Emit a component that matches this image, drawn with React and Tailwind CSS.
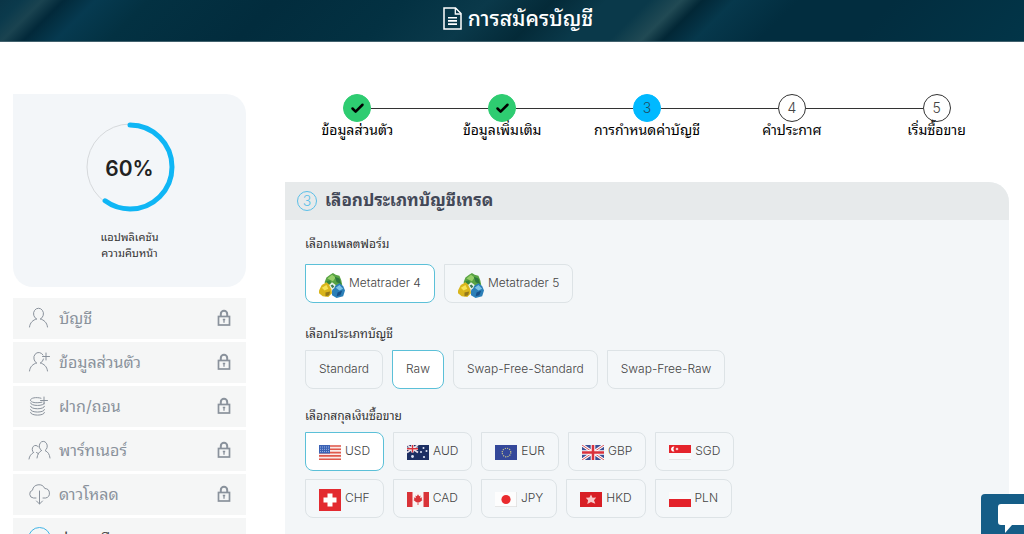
import { Check } from 'lucide-react';

const steps = [
  { id: 1, label: 'ข้อมูลส่วนตัว', state: 'done' },
  { id: 2, label: 'ข้อมูลเพิ่มเติม', state: 'done' },
  { id: 3, label: 'การกำหนดค่าบัญชี', state: 'active' },
  { id: 4, label: 'คำประกาศ', state: 'todo' },
  { id: 5, label: 'เริ่มซื้อขาย', state: 'todo' },
];

const circleStyles = {
  done: 'bg-[#2ecc71] border-[#2ecc71] text-black',
  active: 'bg-[#00b9ff] border-[#00b9ff] text-[#1f4f66]',
  todo: 'bg-white border-[#333333] text-[#444444]',
};

const menu = [
  { icon: 'user', label: 'บัญชี' },
  { icon: 'userPlus', label: 'ข้อมูลส่วนตัว' },
  { icon: 'coins', label: 'ฝาก/ถอน' },
  { icon: 'users', label: 'พาร์ทเนอร์' },
  { icon: 'cloud', label: 'ดาวโหลด' },
];

const platforms = ['Metatrader 4', 'Metatrader 5'];
const accountTypes = ['Standard', 'Raw', 'Swap-Free-Standard', 'Swap-Free-Raw'];
const currencyRows = [
  ['USD', 'AUD', 'EUR', 'GBP', 'SGD'],
  ['CHF', 'CAD', 'JPY', 'HKD', 'PLN'],
];

const menuIcons = {
  user: (
    <>
      <path d="M8.500 12A5 5.600 0 1 1 12.500 12" />
      <path d="M8.500 12C5 13 2 15.500 1.500 20M12.500 12c3.500 1 6.500 3.500 7 8" />
    </>
  ),
  userPlus: (
    <>
      <path d="M8.500 12A5 5.600 0 1 1 15 4M15.500 8a5 5.600 0 0 1-3 4" />
      <path d="M8.500 12C5 13 2 15.500 1.500 20M12.500 12c3.500 1 6.500 3.500 7 8" />
      <path d="M18 2v7M14.500 5.500h7" />
    </>
  ),
  coins: (
    <>
      <path d="M13 3.200C8 1.800 2.500 3 2.500 5.200S8 8.500 14 7.200" />
      <path d="M2.500 8c0 3.400 14 3.400 14 0M2.500 11.300c0 3.400 14 3.400 14 0M2.500 14.600c0 3.400 14 3.400 14 0M2.500 17.500c0 3.600 14 3.600 14 0" />
      <path d="M16 2v7M12.500 5.500h7" />
    </>
  ),
  users: (
    <>
      <path d="M13.500 11.500A4 4.800 0 1 1 17 11.500C20 13 21.500 15 22 19M13.500 11.500C11 13 9.500 15 9 19" />
      <path d="M5.500 13.500A3.500 4 0 1 1 10.500 8M5.500 13.500C3 15 1.500 17 1 20M8.500 13.500l2 1.200" />
    </>
  ),
  cloud: (
    <>
      <path d="M8 15H5.500a4 4 0 0 1-1-7.800A6.500 6.500 0 0 1 16.800 5.500a4.800 4.800 0 0 1 .8 9.500H15" />
      <path d="M11.500 8v13M8.500 18l3 3 3-3" />
    </>
  ),
};

function MenuIcon({ name }) {
  return (
    <svg
      viewBox="0 0 23 22"
      className="w-[23px] h-[22px] shrink-0"
      fill="none"
      stroke="currentColor"
      strokeWidth="1"
      strokeLinecap="round"
      aria-hidden="true"
    >
      {menuIcons[name]}
    </svg>
  );
}

function LockIcon() {
  return (
    <svg viewBox="0 0 14 18" className="w-[14px] h-[18px]" fill="none" stroke="currentColor" aria-hidden="true">
      <rect x="1.500" y="7.500" width="11" height="8.500" strokeWidth="1.700" />
      <path d="M3.800 7.500V5a3.200 3.200 0 0 1 6.400 0v2.500" strokeWidth="2" />
      <path d="M7 9.800v4M5.800 10.500h2.400" strokeWidth="1.300" />
    </svg>
  );
}

function DocumentIcon() {
  return (
    <svg viewBox="0 0 19 23" className="w-[19px] h-[23px]" fill="none" stroke="currentColor" aria-hidden="true">
      <path d="M1 1h11.500L18 6.500V22H1z" strokeWidth="1.500" />
      <path d="M12.300 1v6H18" strokeWidth="1.300" />
      <path d="M5 10.700h9M5 13.900h9M5 17.100h9" strokeWidth="1.600" />
    </svg>
  );
}

function MetatraderLogo() {
  return (
    <svg viewBox="0 0 28 28" className="w-[26px] h-[26px] mt-1" aria-hidden="true">
      <path d="M6 11l2-5 4-3 3-2 3 2 4 1 2 5 1 5-4 3H9z" fill="#58a344" />
      <path d="M9 7l5-4 4 3-3 4z" fill="#96cf68" />
      <path d="M17 5l5 2 2 6-5-2z" fill="#2d7a3d" />
      <path d="M8 10l4-1 1 3-4 2z" fill="#37863e" />
      <path d="M0 20l3-6 5-3 5 4 1 8-4 4-6-1-4-3z" fill="#d9b51c" />
      <path d="M3 17l5-3 2 4-4 2z" fill="#f7e356" />
      <path d="M7 22l5-1-1 4-4 1z" fill="#94781a" />
      <path d="M14 20l3-5 5-3 4 3 2 5-2 6-7 2-5-3z" fill="#2b7fb8" />
      <path d="M18 17l4-3 4 4-4 2z" fill="#7ec4e6" />
      <path d="M20 22l5-2-2 5-4 1z" fill="#164f88" />
      <path d="M11 14l3-3 4 3-2 4h-3z" fill="#e6f2ea" />
      <path d="M12.500 14.500l2-1 2 2-2 2z" fill="#3e7a55" />
    </svg>
  );
}

const flags = {
  USD: (
    <>
      <rect width="22" height="15" fill="#fbe9e7" />
      <path d="M0 1h22M0 4.300h22M0 7.600h22M0 10.900h22M0 14.200h22" stroke="#e0584c" strokeWidth="1.600" />
      <rect width="11" height="8.500" fill="#3b62b5" />
      <path d="M1 2h9M1 4.300h9M1 6.600h9" stroke="#b9cbee" strokeWidth="0.800" strokeDasharray="1 1" />
    </>
  ),
  AUD: (
    <>
      <rect width="22" height="15" fill="#1c2f63" />
      <path d="M0 0l11 7.500M11 0L0 7.500" stroke="#e8dfe8" strokeWidth="1.800" />
      <path d="M5.500 0v7.500M0 3.700h11" stroke="#fff" strokeWidth="2.600" />
      <path d="M5.500 0v7.500M0 3.700h11" stroke="#d8333b" strokeWidth="1.400" />
      <g fill="#dfe6f7">
        <circle cx="5.500" cy="11.500" r="1.400" />
        <circle cx="16.500" cy="3" r="1" />
        <circle cx="14" cy="7" r="1" />
        <circle cx="19.500" cy="6" r="1" />
        <circle cx="17" cy="12" r="1.100" />
      </g>
    </>
  ),
  EUR: (
    <>
      <rect width="22" height="15" fill="#34489a" />
      <circle cx="11.500" cy="7.500" r="4.300" fill="none" stroke="#c9c68a" strokeWidth="1.200" strokeDasharray="1.200 1.050" />
    </>
  ),
  GBP: (
    <>
      <rect width="22" height="15" fill="#3d4f95" />
      <path d="M0 0l22 15M22 0L0 15" stroke="#fff" strokeWidth="3" />
      <path d="M0 0l22 15M22 0L0 15" stroke="#d8545c" strokeWidth="1" />
      <path d="M11 0v15M0 7.500h22" stroke="#fff" strokeWidth="4.600" />
      <path d="M11 0v15M0 7.500h22" stroke="#d9313c" strokeWidth="2.600" />
    </>
  ),
  SGD: (
    <>
      <rect width="22" height="15" fill="#fafafa" />
      <rect width="22" height="8" fill="#e5242b" />
      <path d="M5.500 1.800a2.500 2.500 0 1 0 0 4.600 3 3 0 0 1 0-4.600z" fill="#fff" />
      <circle cx="8" cy="4" r="1.300" fill="#f9c9cb" />
      <path d="M0 14.600h22" stroke="#dddddd" strokeWidth="0.800" />
    </>
  ),
  CHF: (
    <>
      <rect width="22" height="22" fill="#e32a30" />
      <path d="M11 4.500v13M4.500 11h13" stroke="#fff" strokeWidth="5" />
    </>
  ),
  CAD: (
    <>
      <rect width="22" height="15" fill="#f8f4f4" />
      <path d="M0 0h5.500v15H0zM16.500 0H22v15h-5.500z" fill="#d93338" />
      <path d="M11 2.200l1.200 2 1.300-.6-.3 2.600 2-1-.6 2 .9.800-2.800 2.300H11.400V13h-.8v-2.700H9.300L6.500 8l.9-.8-.6-2 2 1-.3-2.600 1.300.6z" fill="#d93338" />
    </>
  ),
  JPY: (
    <>
      <rect width="22" height="15" fill="#fdfdfd" />
      <path d="M0 14.600h22M21.600 0v15" stroke="#dcdcdc" strokeWidth="0.800" />
      <circle cx="11" cy="7.500" r="4.600" fill="#ea2a2e" />
    </>
  ),
  HKD: (
    <>
      <rect width="22" height="15" fill="#d81f26" />
      <path d="M11 2.500l1.500 3.200 3.700-.2-2.200 2.700 1.300 3.600-4.300-1.700-3.700 1.900.8-3.800-2.300-2.500 3.700-.2z" fill="#f9c9c9" />
    </>
  ),
  PLN: (
    <>
      <rect width="22" height="15" fill="#fafafa" />
      <rect y="7" width="22" height="8" fill="#e3222a" />
    </>
  ),
};

function Flag({ code }) {
  const square = code === 'CHF';
  return (
    <svg
      viewBox={square ? '0 0 22 22' : '0 0 22 15'}
      className={square ? 'w-[22px] h-[22px] mt-1' : 'w-[22px] h-[15px] mt-1'}
      aria-hidden="true"
    >
      {flags[code]}
    </svg>
  );
}

function Option({ selected, children }) {
  return (
    <button
      type="button"
      aria-pressed={selected}
      className={`h-[39px] pb-[2px] px-[13px] flex items-center gap-1 border rounded-lg rounded-tl-none text-[12px] leading-[18px] font-light text-[#444444] cursor-pointer ${
        selected ? 'bg-white border-[#5bc0d8]' : 'bg-[#f4f7f9] border-[#dde3e6]'
      }`}
    >
      {children}
    </button>
  );
}

function Progress({ value }) {
  const length = 2 * Math.PI * 42;
  return (
    <section className="h-[193px] pt-[27px] flex flex-col items-center bg-[#f3f6f9] rounded-[20px] rounded-tl-none">
      <div className="grid place-items-center">
        <svg viewBox="0 0 92 92" className="col-start-1 row-start-1 w-[92px] h-[92px] -rotate-90" fill="none" aria-hidden="true">
          <circle cx="46" cy="46" r="43" stroke="#d6d9dc" strokeWidth="1" />
          <circle
            cx="46"
            cy="46"
            r="42"
            stroke="#0fb6f5"
            strokeWidth="5"
            strokeLinecap="round"
            strokeDasharray={`${(length * value) / 100} ${length}`}
          />
        </svg>
        <span className="col-start-1 row-start-1 pt-1 text-[21px] leading-7 font-semibold text-[#222222]">{value}%</span>
      </div>
      <p className="mt-4 text-[11px] leading-4 text-center text-[#333333]">
        แอปพลิเคชัน
        <br />
        ความคืบหน้า
      </p>
    </section>
  );
}

function Sidebar() {
  return (
    <aside className="w-[233px] shrink-0">
      <Progress value={60} />
      <nav className="mt-[11px] flex flex-col gap-[3px]">
        {menu.map((item) => (
          <a key={item.label} href="#" className="h-[41px] pb-[2px] px-[15px] flex items-center bg-[#f5f6f6] text-[#8a929c]">
            <MenuIcon name={item.icon} />
            <span className="ml-2 text-[16px] leading-6">{item.label}</span>
            <span className="ml-auto">
              <LockIcon />
            </span>
          </a>
        ))}
        <a href="#" className="h-[41px] px-[15px] flex items-center bg-[#f5f6f6] text-[#444444]">
          <span className="w-[23px] h-[23px] rounded-full border border-[#41b4e6]" />
          <span className="ml-2 text-[16px] leading-6">ช่วยเหลือ</span>
        </a>
      </nav>
    </aside>
  );
}

function Stepper() {
  return (
    <ol className="flex">
      {steps.map((step, i) => (
        <li key={step.id} className="flex-1 flex flex-col items-center">
          <div className="w-full flex items-center">
            <span className={`flex-1 h-px ${i > 0 ? 'bg-[#333333]' : ''}`} />
            <span
              className={`w-[28px] h-[28px] rounded-full border flex items-center justify-center text-[14px] leading-5 font-light ${circleStyles[step.state]}`}
            >
              {step.state === 'done' ? <Check size={15} strokeWidth={4} /> : step.id}
            </span>
            <span className={`flex-1 h-px ${i < steps.length - 1 ? 'bg-[#333333]' : ''}`} />
          </div>
          <span className="text-[14px] leading-4 whitespace-nowrap text-black">{step.label}</span>
        </li>
      ))}
    </ol>
  );
}

function Field({ label, children }) {
  return (
    <div role="group" aria-label={label}>
      <h3 className="mb-2 text-[12px] leading-4 text-[#333333]">{label}</h3>
      {children}
    </div>
  );
}

export default function App() {
  return (
    <div className="h-screen overflow-hidden bg-white font-['Inter','Noto_Sans_Thai_Looped','Noto_Looped_Thai','Loma','Waree','Tahoma','Garuda',sans-serif]">
      <header className="h-[42px] pb-1 pl-3 flex items-center justify-center gap-[6px] text-white border-b border-[#41616d] bg-[linear-gradient(135deg,#0a3547_0%,#0b3a4c_2%,#1a4350_4%,#02293a_6%,#063a50_9%,#033142_14%,#022c3d_26%,#033142_38%,#0a394a_46%,#042a38_52%,#0a394a_57%,#0a394a_61%,#214a54_64%,#022736_66%,#06384c_69%,#022d3f_75%,#022d3f_84%,#023548_100%)]">
        <DocumentIcon />
        <h1 className="text-[21px] leading-7 font-medium">การสมัครบัญชี</h1>
      </header>

      <div className="pt-[52px] pl-[13px] pr-[15px] flex gap-[39px]">
        <Sidebar />

        <main className="flex-1 min-w-0">
          <Stepper />

          <section className="mt-11 pb-6 bg-[#f3f6f8] rounded-tr-[20px] overflow-hidden">
            <header className="h-[38px] pl-3 flex items-center gap-2 bg-[#e7eaeb]">
              <span className="w-5 h-5 rounded-full border border-[#5bbfe8] flex items-center justify-center text-[14px] leading-4 font-light text-[#5bbfe8]">
                3
              </span>
              <h2 className="text-[17px] leading-6 pb-[2px] font-bold text-[#434857]">เลือกประเภทบัญชีเทรด</h2>
            </header>

            <div className="pt-4 px-5 flex flex-col gap-[19px]">
              <Field label="เลือกแพลตฟอร์ม">
                <div className="py-1 flex flex-wrap gap-[9px]">
                  {platforms.map((name) => (
                    <Option key={name} selected={name === 'Metatrader 4'}>
                      <MetatraderLogo />
                      {name}
                    </Option>
                  ))}
                </div>
              </Field>

              <Field label="เลือกประเภทบัญชี">
                <div className="flex flex-wrap gap-[9px]">
                  {accountTypes.map((name) => (
                    <Option key={name} selected={name === 'Raw'}>
                      {name}
                    </Option>
                  ))}
                </div>
              </Field>

              <Field label="เลือกสกุลเงินซื้อขาย">
                <div className="flex flex-col gap-2">
                  {currencyRows.map((row) => (
                    <div key={row[0]} className="flex flex-wrap gap-[9px]">
                      {row.map((code) => (
                        <Option key={code} selected={code === 'USD'}>
                          <Flag code={code} />
                          {code}
                        </Option>
                      ))}
                    </div>
                  ))}
                </div>
              </Field>
            </div>
          </section>
        </main>
      </div>

      <button
        type="button"
        aria-label="Chat"
        className="fixed right-0 bottom-0 w-[43px] h-[40px] pt-[10px] pl-[17px] rounded-tl-[4px] bg-[#155d87] text-white overflow-hidden cursor-pointer"
      >
        <svg viewBox="0 0 34 30" className="w-[34px] h-[30px] max-w-none" fill="currentColor" aria-hidden="true">
          <path d="M3 0h28a3 3 0 0 1 3 3v15a3 3 0 0 1-3 3H14l-7 8v-8H3a3 3 0 0 1-3-3V3a3 3 0 0 1 3-3z" />
        </svg>
      </button>
    </div>
  );
}
